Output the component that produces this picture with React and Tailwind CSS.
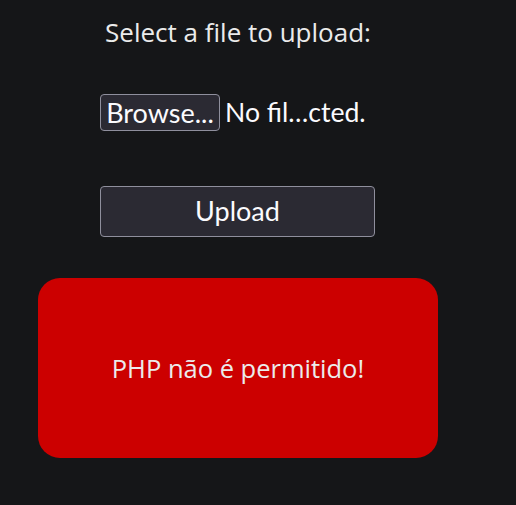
export default function App() {
  return (
    <div className="min-h-[505px] w-[516px] bg-[#151618] pt-[13px] text-[#ebebeb]" style={{ fontFamily: '"Open Sans", "Noto Sans", sans-serif' }}>
      <div className="ml-[38px] flex w-[400px] flex-col">
        <h1 className="text-center text-[26px] leading-[38px] font-normal" style={{ fontFamily: '"Open Sans", sans-serif' }}>
          Select a file to upload:
        </h1>
        <div className="ml-[62px] mt-[42px] flex w-[275px] flex-col" style={{ fontFamily: 'Lato, sans-serif' }}>
          <div className="flex items-center">
            <span className="flex h-[37px] w-[120px] items-center justify-center whitespace-nowrap rounded-[4px] border border-[#8f8f9d] bg-[#2b2a33] text-[27px] text-[#fbfbfe]">
              Browse...
            </span>
            <span className="ml-[5px] whitespace-nowrap text-[26.6px] text-[#fbfbfe]">No fil…cted.</span>
          </div>
          <button className="mt-[53px] flex h-[51px] w-[275px] items-center justify-center rounded-[4px] border border-[#8f8f9d] bg-[#2b2a33] text-[27px] text-[#fbfbfe]">
            Upload
          </button>
        </div>
        <div className="mt-[41px] flex h-[180px] w-[400px] items-center justify-center rounded-[22px] bg-[#cc0000] text-[25.5px] text-[#ebebeb]">
          PHP não é permitido!
        </div>
      </div>
    </div>
  );
}
